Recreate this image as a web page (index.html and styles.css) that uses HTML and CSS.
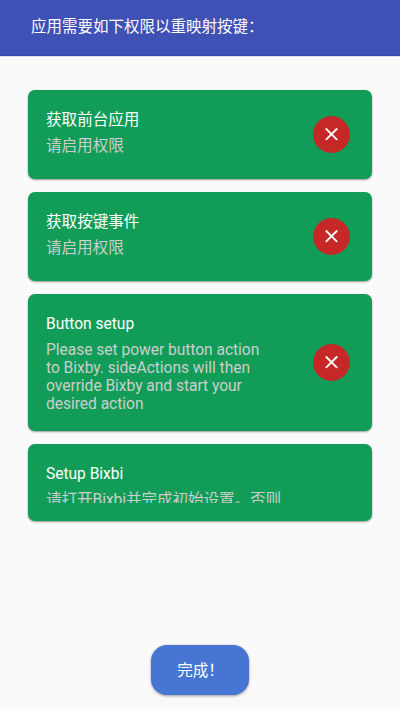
FILE: index.html
```html
<!DOCTYPE html>
<html lang="zh-CN">
<head>
<meta charset="utf-8">
<title>权限</title>
<link rel="stylesheet" href="styles.css">
</head>
<body>
<header class="bar">应用需要如下权限以重映射按键：</header>
<main class="list">
  <section class="card">
    <div class="text"><h2>获取前台应用</h2><p>请启用权限</p></div>
    <span class="status"><svg viewBox="0 0 37 37"><path d="M13.3 13L23.7 23.4M23.7 13L13.3 23.4"/></svg></span>
  </section>
  <section class="card">
    <div class="text"><h2>获取按键事件</h2><p>请启用权限</p></div>
    <span class="status"><svg viewBox="0 0 37 37"><path d="M13.3 13L23.7 23.4M23.7 13L13.3 23.4"/></svg></span>
  </section>
  <section class="card tall">
    <div class="text"><h2>Button setup</h2><p>Please set power button action<br>to Bixby. sideActions will then<br>override Bixby and start your<br>desired action</p></div>
    <span class="status"><svg viewBox="0 0 37 37"><path d="M13.3 13L23.7 23.4M23.7 13L13.3 23.4"/></svg></span>
  </section>
  <section class="card clipped">
    <div class="text"><h2>Setup Bixbi</h2><p>请打开Bixbi并完成初始设置。否则</p></div>
  </section>
</main>
<footer class="footer"><button class="done">完成！</button></footer>
</body>
</html>
```

FILE: styles.css
```css
* { box-sizing: border-box; }
body {
  margin: 0;
  height: 711px;
  display: flex;
  flex-direction: column;
  overflow: hidden;
  background: #fafafa;
  font-family: Roboto, "Noto Sans CJK SC", sans-serif;
}
.bar {
  height: 56px;
  padding: 1px 0 0 31px;
  background: #3f51b5;
  box-shadow: inset 0 -1px #3547a8, 0 1px #d9dcef;
  color: #fff;
  font-size: 15.5px;
  line-height: 53px;
}
.list {
  flex: 1;
  padding: 34px 28px 0;
  display: flex;
  flex-direction: column;
  gap: 13px;
}
.card {
  height: 89px;
  flex: none;
  padding: 18px 22px 18px 18px;
  display: flex;
  align-items: center;
  justify-content: space-between;
  border-radius: 7px;
  background: #119d58;
  box-shadow: 0 1px 2px rgba(0, 0, 0, .4);
}
.tall { height: 137px; }
.clipped { height: 77px; }
.text { align-self: stretch; white-space: nowrap; overflow: hidden; }
h2 {
  margin: 0 0 5px;
  color: #fff;
  font-size: 15.6px;
  font-weight: 400;
  line-height: 24px;
  letter-spacing: -.03px;
}
p {
  margin: 0;
  color: #cccecc;
  font-size: 15.6px;
  line-height: 18px;
  letter-spacing: -.04px;
}
.clipped p { letter-spacing: -.08px; }
.status { width: 37px; height: 37px; border-radius: 50%; background: #c62828; }
.status svg { display: block; }
.status path { stroke: #fff; stroke-width: 1.8; fill: none; stroke-linecap: round; }
.footer { height: 66px; text-align: center; }
.done {
  width: 98px;
  height: 50px;
  padding: 2px 0 0 1px;
  border: 0;
  border-radius: 16px;
  background: #4775d3;
  box-shadow: 0 1px 3px rgba(0, 0, 0, .4);
  color: #fff;
  font: 15.5px/48px Roboto, "Noto Sans CJK SC", sans-serif;
}
```
